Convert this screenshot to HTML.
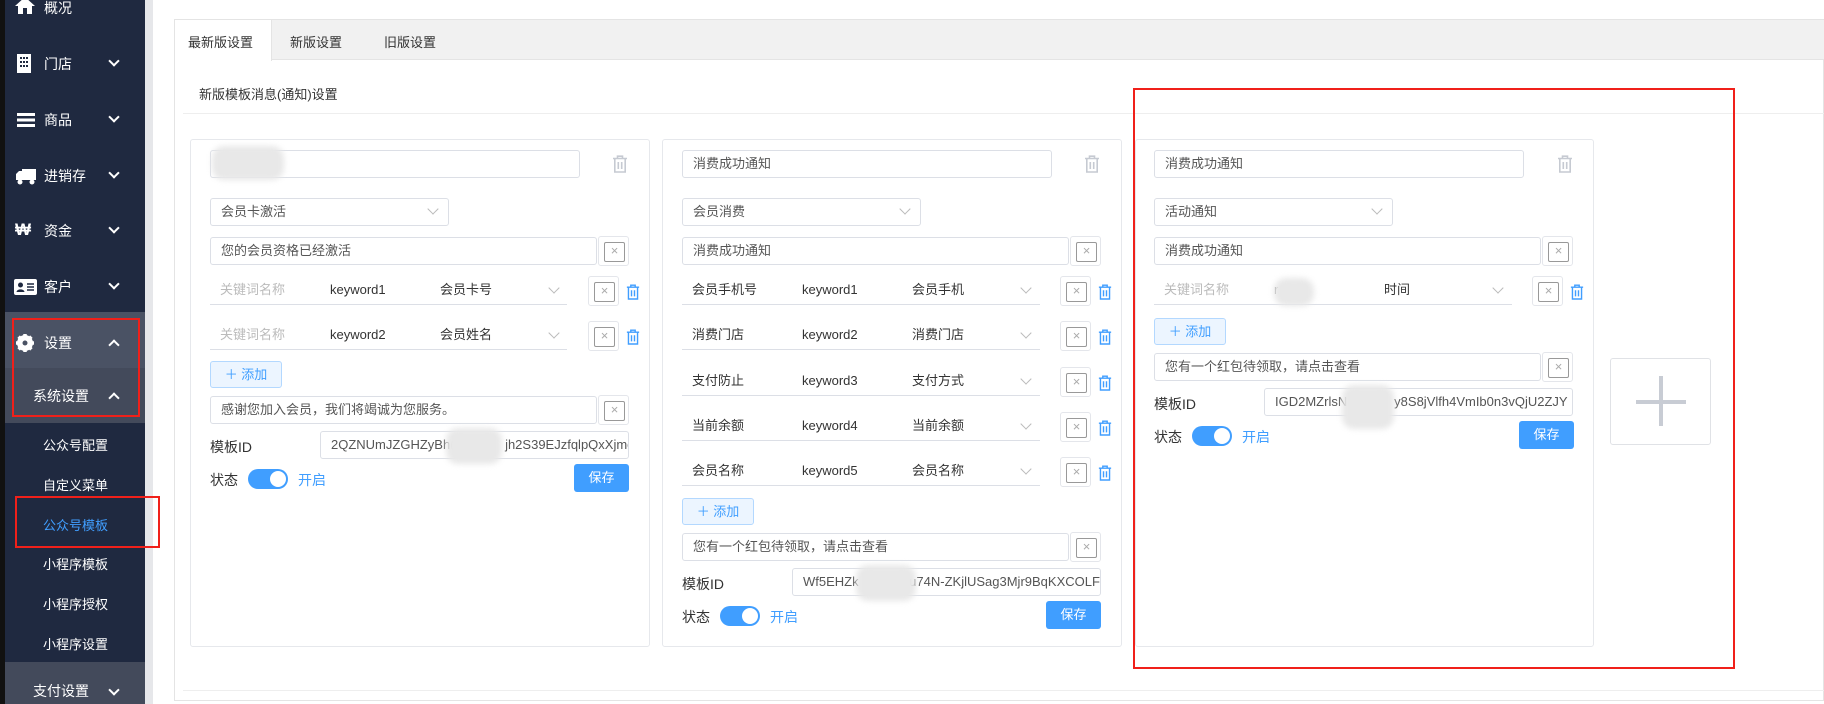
<!DOCTYPE html>
<html><head><meta charset="utf-8"><style>
*{box-sizing:border-box;margin:0;padding:0}
body{width:1824px;height:704px;overflow:hidden;background:#fff;font-family:"Liberation Sans","Noto Sans CJK SC",sans-serif;font-size:13px;color:#333;position:relative}
.a{position:absolute}
.sb{left:0;top:0;width:145px;height:704px;background:#1f2940}
.blk{left:0;top:0;width:5px;height:704px;background:#111}
.mi{position:absolute;left:0;width:145px;color:#fff;font-size:14px}
.mi .t{position:absolute;left:44px}
.mi .ch{position:absolute;left:110px;width:8px;height:8px;border-right:2px solid #fff;border-bottom:2px solid #fff;transform:rotate(45deg)}
.mi .up{transform:rotate(-135deg)}
.mi svg{position:absolute}
.sub{position:absolute;left:43px;color:#fff;font-size:13px}
.red{position:absolute;border:2px solid #f0201a}
.inp{position:absolute;border:1px solid #dcdfe6;border-radius:3px;height:28px;line-height:26px;padding-left:10px;color:#555;background:#fff;white-space:nowrap;overflow:hidden}
.xb{position:absolute;width:31px;height:30px;border:1px solid #e4e6eb;border-radius:3px}
.xb:after{content:"×";position:absolute;left:5px;top:5px;width:19px;height:18px;border:1px solid #999;border-radius:2px;text-align:center;line-height:16px;color:#aaa;font-size:13px}
.row{position:absolute;height:29px;border-bottom:1px solid #dcdfe6;line-height:28px}
.row span{position:absolute}
.row .c{width:8px;height:8px;border-right:1px solid #bbb;border-bottom:1px solid #bbb;transform:rotate(45deg);top:8px}
.sc{position:absolute;width:8px;height:8px;border-right:1px solid #bbb;border-bottom:1px solid #bbb;transform:rotate(45deg)}
.ic{position:absolute}
.add{position:absolute;width:72px;height:27px;border:1px solid #b3d8ff;background:#ecf5ff;color:#409eff;border-radius:3px;text-align:center;line-height:25px}
.sw{position:absolute;width:40px;height:20px;border-radius:10px;background:#409eff}
.sw:after{content:"";position:absolute;right:2px;top:2px;width:16px;height:16px;border-radius:50%;background:#fff}
.btn{position:absolute;width:55px;height:28px;background:#409eff;color:#fff;border-radius:3px;text-align:center;line-height:28px}
.card{position:absolute;top:139px;height:508px;border:1px solid #e6e8ec;border-radius:3px}
.blur{position:absolute;background:#e8e8e8;border-radius:12px;filter:blur(3px)}
</style></head><body>
<svg width="0" height="0" style="position:absolute"><defs>
<symbol id="trG" viewBox="0 0 16 18"><path d="M1 3.5H15M5.5 3.5V1.2H10.5V3.5M2.8 3.5V17H13.2V3.5M6.3 7V14M9.7 7V14" fill="none" stroke="#c6cad2" stroke-width="1.6"/></symbol>
<symbol id="trB" viewBox="0 0 16 18"><path d="M1 3.5H15M5.5 3.5V1.2H10.5V3.5M2.8 3.5V17H13.2V3.5M6.3 7V14M9.7 7V14" fill="none" stroke="#409eff" stroke-width="1.6"/></symbol>
</defs></svg>
<div class="a sb"></div><div class="a blk"></div>
<div class="a" style="left:145px;top:0;width:8px;height:704px;background:#e6e7ea"></div>
<div class="a" style="left:5px;top:312px;width:140px;height:56px;background:#4a5264"></div>
<div class="a" style="left:5px;top:368px;width:140px;height:55px;background:#434a5b"></div>
<div class="a" style="left:5px;top:662px;width:140px;height:42px;background:#434a5b"></div>
<div class="mi" style="top:-2px"><svg style="left:14px;top:-2px" width="22" height="18" viewBox="0 0 22 18"><path d="M11 1L1 10H4V18H9V12H13V18H18V10H21Z" fill="#fff"/></svg><span class="t">概况</span></div>
<div class="mi" style="top:54px"><svg style="left:17px;top:0" width="14" height="19" viewBox="0 0 14 19"><rect width="14" height="19" fill="#fff"/><path d="M3 3h2v2H3zM6 3h2v2H6zM9 3h2v2H9zM3 7h2v2H3zM6 7h2v2H6zM9 7h2v2H9zM3 11h2v2H3zM6 11h2v2H6zM9 11h2v2H9z" fill="#1f2940"/></svg><span class="t">门店</span><span class="ch" style="top:3px"></span></div>
<div class="mi" style="top:110px"><svg style="left:17px;top:3px" width="18" height="14"><rect y="0" width="18" height="3" fill="#fff"/><rect y="5.5" width="18" height="3" fill="#fff"/><rect y="11" width="18" height="3" fill="#fff"/></svg><span class="t">商品</span><span class="ch" style="top:3px"></span></div>
<div class="mi" style="top:166px"><svg style="left:15px;top:2px" width="22" height="17" viewBox="0 0 22 17"><path d="M7 1H21V12H7ZM1 6L4 3H7V12H1Z" fill="#fff"/><circle cx="5" cy="14" r="2.5" fill="#fff"/><circle cx="17" cy="14" r="2.5" fill="#fff"/></svg><span class="t">进销存</span><span class="ch" style="top:3px"></span></div>
<div class="mi" style="top:221px"><span class="a" style="left:15px;top:-1px;font-weight:bold;font-size:17px">₩</span><span class="t">资金</span><span class="ch" style="top:3px"></span></div>
<div class="mi" style="top:277px"><svg style="left:14px;top:2px" width="23" height="16" viewBox="0 0 23 16"><rect width="23" height="16" rx="2" fill="#fff"/><circle cx="6.5" cy="6" r="2.5" fill="#1f2940"/><path d="M2.5 13C3 9.5 10 9.5 10.5 13Z" fill="#1f2940"/><path d="M13 5H20M13 8H20M13 11H20" stroke="#1f2940" stroke-width="1.5"/></svg><span class="t">客户</span><span class="ch" style="top:3px"></span></div>
<div class="mi" style="top:333px"><svg style="left:16px;top:1px" width="18" height="18" viewBox="0 0 18 18"><circle cx="9" cy="9" r="6" fill="none" stroke="#fff" stroke-width="4"/><path d="M9 0V18M0 9H18M2.6 2.6L15.4 15.4M15.4 2.6L2.6 15.4" stroke="#fff" stroke-width="3.5"/><circle cx="9" cy="9" r="2.5" fill="#4a5264"/></svg><span class="t">设置</span><span class="ch up" style="top:8px"></span></div>
<div class="mi" style="top:386px"><span class="t" style="left:33px">系统设置</span><span class="ch up" style="top:8px"></span></div>
<div class="sub" style="top:435px">公众号配置</div>
<div class="sub" style="top:475px">自定义菜单</div>
<div class="sub" style="top:515px;color:#409eff">公众号模板</div>
<div class="sub" style="top:554px">小程序模板</div>
<div class="sub" style="top:594px">小程序授权</div>
<div class="sub" style="top:634px">小程序设置</div>
<div class="mi" style="top:681px"><span class="t" style="left:33px">支付设置</span><span class="ch" style="top:5px"></span></div>
<div class="red" style="left:12px;top:318px;width:128px;height:99px"></div>
<div class="red" style="left:15px;top:496px;width:145px;height:52px"></div>

<div class="a" style="left:174px;top:19px;width:1650px;height:682px;border:1px solid #e4e4e4"></div>
<div class="a" style="left:175px;top:20px;width:1649px;height:40px;background:#f1f1f1;border-bottom:1px solid #e4e4e4"></div>
<div class="a" style="left:175px;top:20px;width:97px;height:41px;background:#fff;border-right:1px solid #e4e4e4"></div>
<div class="a" style="left:188px;top:32px;color:#333">最新版设置</div>
<div class="a" style="left:290px;top:32px;color:#333">新版设置</div>
<div class="a" style="left:384px;top:32px;color:#333">旧版设置</div>
<div class="a" style="left:199px;top:84px">新版模板消息(通知)设置</div>
<div class="a" style="left:183px;top:113px;width:1641px;height:1px;background:#eee"></div>
<div class="a" style="left:183px;top:690px;width:1641px;height:1px;background:#eee"></div>

<!-- card1 -->
<div class="card" style="left:190px;width:460px"></div>
<div class="inp" style="left:210px;top:150px;width:370px"></div>
<div class="blur" style="left:212px;top:146px;width:72px;height:34px"></div>
<svg class="ic" style="left:612px;top:155px" width="16" height="18"><use href="#trG"/></svg>
<div class="inp" style="left:210px;top:198px;width:239px">会员卡激活</div><div class="sc" style="left:429px;top:205px"></div>
<div class="inp" style="left:210px;top:237px;width:387px">您的会员资格已经激活</div><div class="xb" style="left:598px;top:236px"></div>
<div class="row" style="left:210px;top:276px;width:357px"><span style="left:10px;color:#bbb">关键词名称</span><span style="left:120px">keyword1</span><span style="left:230px">会员卡号</span><span class="c" style="left:340px"></span></div>
<div class="xb" style="left:588px;top:276px"></div><svg class="ic" style="left:626px;top:284px" width="14" height="16"><use href="#trB"/></svg>
<div class="row" style="left:210px;top:321px;width:357px"><span style="left:10px;color:#bbb">关键词名称</span><span style="left:120px">keyword2</span><span style="left:230px">会员姓名</span><span class="c" style="left:340px"></span></div>
<div class="xb" style="left:588px;top:321px"></div><svg class="ic" style="left:626px;top:329px" width="14" height="16"><use href="#trB"/></svg>
<div class="add" style="left:210px;top:361px">＋ 添加</div>
<div class="inp" style="left:210px;top:396px;width:387px">感谢您加入会员，我们将竭诚为您服务。</div><div class="xb" style="left:598px;top:395px"></div>
<div class="a" style="left:210px;top:437px;font-size:14px">模板ID</div>
<div class="inp" style="left:320px;top:431px;width:309px">2QZNUmJZGHZyBh(&nbsp;&nbsp;&nbsp;&nbsp;&nbsp;&nbsp;&nbsp;&nbsp;&nbsp;&nbsp;&nbsp;&nbsp;&nbsp;&nbsp;jh2S39EJzfqlpQxXjmc</div>
<div class="blur" style="left:446px;top:428px;width:56px;height:36px"></div>
<div class="a" style="left:210px;top:470px;font-size:14px">状态</div><div class="sw" style="left:248px;top:469px"></div><div class="a" style="left:298px;top:470px;color:#409eff;font-size:14px">开启</div>
<div class="btn" style="left:574px;top:464px">保存</div>

<!-- card2 -->
<div class="card" style="left:662px;width:460px"></div>
<div class="inp" style="left:682px;top:150px;width:370px">消费成功通知</div>
<svg class="ic" style="left:1084px;top:155px" width="16" height="18"><use href="#trG"/></svg>
<div class="inp" style="left:682px;top:198px;width:239px">会员消费</div><div class="sc" style="left:901px;top:205px"></div>
<div class="inp" style="left:682px;top:237px;width:387px">消费成功通知</div><div class="xb" style="left:1070px;top:236px"></div>
<div class="row" style="left:682px;top:276px;width:358px"><span style="left:10px">会员手机号</span><span style="left:120px">keyword1</span><span style="left:230px">会员手机</span><span class="c" style="left:340px"></span></div>
<div class="xb" style="left:1060px;top:276px"></div><svg class="ic" style="left:1098px;top:284px" width="14" height="16"><use href="#trB"/></svg>
<div class="row" style="left:682px;top:321px;width:358px"><span style="left:10px">消费门店</span><span style="left:120px">keyword2</span><span style="left:230px">消费门店</span><span class="c" style="left:340px"></span></div>
<div class="xb" style="left:1060px;top:321px"></div><svg class="ic" style="left:1098px;top:329px" width="14" height="16"><use href="#trB"/></svg>
<div class="row" style="left:682px;top:367px;width:358px"><span style="left:10px">支付防止</span><span style="left:120px">keyword3</span><span style="left:230px">支付方式</span><span class="c" style="left:340px"></span></div>
<div class="xb" style="left:1060px;top:367px"></div><svg class="ic" style="left:1098px;top:375px" width="14" height="16"><use href="#trB"/></svg>
<div class="row" style="left:682px;top:412px;width:358px"><span style="left:10px">当前余额</span><span style="left:120px">keyword4</span><span style="left:230px">当前余额</span><span class="c" style="left:340px"></span></div>
<div class="xb" style="left:1060px;top:412px"></div><svg class="ic" style="left:1098px;top:420px" width="14" height="16"><use href="#trB"/></svg>
<div class="row" style="left:682px;top:457px;width:358px"><span style="left:10px">会员名称</span><span style="left:120px">keyword5</span><span style="left:230px">会员名称</span><span class="c" style="left:340px"></span></div>
<div class="xb" style="left:1060px;top:457px"></div><svg class="ic" style="left:1098px;top:465px" width="14" height="16"><use href="#trB"/></svg>
<div class="add" style="left:682px;top:498px">＋ 添加</div>
<div class="inp" style="left:682px;top:533px;width:387px">您有一个红包待领取，请点击查看</div><div class="xb" style="left:1070px;top:532px"></div>
<div class="a" style="left:682px;top:574px;font-size:14px">模板ID</div>
<div class="inp" style="left:792px;top:568px;width:309px">Wf5EHZk&nbsp;&nbsp;&nbsp;&nbsp;&nbsp;&nbsp;&nbsp;&nbsp;&nbsp;&nbsp;&nbsp;&nbsp;&nbsp;&nbsp;u74N-ZKjlUSag3Mjr9BqKXCOLF</div>
<div class="blur" style="left:856px;top:565px;width:60px;height:36px"></div>
<div class="a" style="left:682px;top:607px;font-size:14px">状态</div><div class="sw" style="left:720px;top:606px"></div><div class="a" style="left:770px;top:607px;color:#409eff;font-size:14px">开启</div>
<div class="btn" style="left:1046px;top:601px">保存</div>

<!-- card3 -->
<div class="card" style="left:1135px;width:459px"></div>
<div class="inp" style="left:1154px;top:150px;width:370px">消费成功通知</div>
<svg class="ic" style="left:1557px;top:155px" width="16" height="18"><use href="#trG"/></svg>
<div class="inp" style="left:1154px;top:198px;width:239px">活动通知</div><div class="sc" style="left:1373px;top:205px"></div>
<div class="inp" style="left:1154px;top:237px;width:387px">消费成功通知</div><div class="xb" style="left:1542px;top:236px"></div>
<div class="row" style="left:1154px;top:276px;width:358px"><span style="left:10px;color:#bbb">关键词名称</span><span style="left:120px;color:#888">r</span><span style="left:230px">时间</span><span class="c" style="left:340px"></span></div>
<div class="blur" style="left:1274px;top:278px;width:40px;height:28px"></div>
<div class="xb" style="left:1532px;top:276px"></div><svg class="ic" style="left:1570px;top:284px" width="14" height="16"><use href="#trB"/></svg>
<div class="add" style="left:1154px;top:318px">＋ 添加</div>
<div class="inp" style="left:1154px;top:353px;width:387px">您有一个红包待领取，请点击查看</div><div class="xb" style="left:1542px;top:352px"></div>
<div class="a" style="left:1154px;top:394px;font-size:14px">模板ID</div>
<div class="inp" style="left:1264px;top:388px;width:309px">IGD2MZrlsN&nbsp;&nbsp;&nbsp;&nbsp;&nbsp;&nbsp;&nbsp;&nbsp;&nbsp;&nbsp;&nbsp;&nbsp;&nbsp;y8S8jVlfh4VmIb0n3vQjU2ZJY</div>
<div class="blur" style="left:1342px;top:385px;width:52px;height:44px"></div>
<div class="a" style="left:1154px;top:427px;font-size:14px">状态</div><div class="sw" style="left:1192px;top:426px"></div><div class="a" style="left:1242px;top:427px;color:#409eff;font-size:14px">开启</div>
<div class="btn" style="left:1519px;top:421px">保存</div>

<div class="a" style="left:1610px;top:358px;width:101px;height:87px;border:1px solid #e0e2e6;border-radius:3px"></div>
<div class="a" style="left:1636px;top:400px;width:50px;height:4px;background:#c8ccd4"></div>
<div class="a" style="left:1659px;top:376px;width:4px;height:50px;background:#c8ccd4"></div>

<div class="red" style="left:1133px;top:88px;width:602px;height:581px"></div>
</body></html>
